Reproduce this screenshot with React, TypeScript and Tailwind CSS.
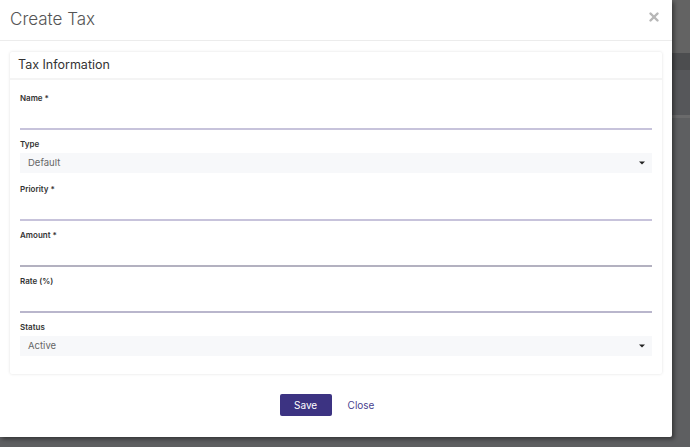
import { X } from "lucide-react";

const font = { fontFamily: "Inter, 'Open Sans', sans-serif" };

function Label({ children }: { children: React.ReactNode }) {
  return <div className="text-[8px] font-semibold leading-[10px] text-[#333]">{children}</div>;
}

function TextField({ label, line }: { label: string; line: string }) {
  return (
    <div className="flex flex-col">
      <Label>{label}</Label>
      <div className={`mt-[25px] h-[2px] ${line}`} />
    </div>
  );
}

function SelectField({ label, value }: { label: string; value: string }) {
  return (
    <div className="flex flex-col pb-[2px]">
      <Label>{label}</Label>
      <div className="mt-[4px] flex h-[20px] items-center justify-between bg-[#f7f8fa] pl-[8px] pr-[7px] text-[9.5px] text-[#666]">
        <span>{value}</span>
        <svg width="6" height="4" viewBox="0 0 6 4" aria-hidden="true">
          <path d="M0 0.5h6L3 3.5z" fill="#222" />
        </svg>
      </div>
    </div>
  );
}

export default function App() {
  return (
    <div className="relative h-[447px] w-[690px] overflow-hidden bg-[#5e5f61]" style={font}>
      {/* backdrop stripes behind the dialog */}
      <div className="flex flex-col">
        <div className="h-[53px] bg-[#636363]" />
        <div className="h-[17px] bg-[#4c4d4f]" />
        <div className="h-[45px] bg-[#56575a]" />
        <div className="h-[3px] bg-[#6a6a6b]" />
      </div>

      <div className="absolute left-0 top-0 flex h-[437px] w-[672px] flex-col rounded-br-[2px] bg-white shadow-[2px_2px_4px_rgba(0,0,0,0.45)]">
        {/* Header */}
        <div className="flex h-[41px] items-center justify-between border-b border-[#ececec] pl-[10px] pr-[11px]">
          <h2 className="text-[17px] font-light text-[#555]">Create Tax</h2>
          <X size={14} strokeWidth={4.2} className="mt-[-7px] text-[#b7b7b7]" />
        </div>

        {/* Card */}
        <div className="mx-[10px] mt-[11px] rounded-[2px] bg-white shadow-[0_0_3px_rgba(0,0,0,0.13)]">
          <div className="flex h-[28px] items-center border-b-2 border-[#f4f4f4] px-[8px] text-[12.5px] text-[#333]">
            Tax Information
          </div>
          <div className="flex flex-col gap-[9px] px-[10px] pb-[16px] pt-[13px]">
            <TextField label="Name *" line="bg-[#c7c3db]" />
            <SelectField label="Type" value="Default" />
            <TextField label="Priority *" line="bg-[#c7c3db]" />
            <TextField label="Amount *" line="bg-[#b3b1c0]" />
            <TextField label="Rate (%)" line="bg-[#b9b6cc]" />
            <SelectField label="Status" value="Active" />
          </div>
        </div>

        {/* Footer */}
        <div className="mt-[20px] flex items-center justify-center gap-[16px] pr-[18px]">
          <button className="h-[22px] w-[52px] rounded-[2px] bg-[#3c3382] text-[10px] text-white">Save</button>
          <button className="text-[10px] text-[#4a3f8f]">Close</button>
        </div>
      </div>
    </div>
  );
}
